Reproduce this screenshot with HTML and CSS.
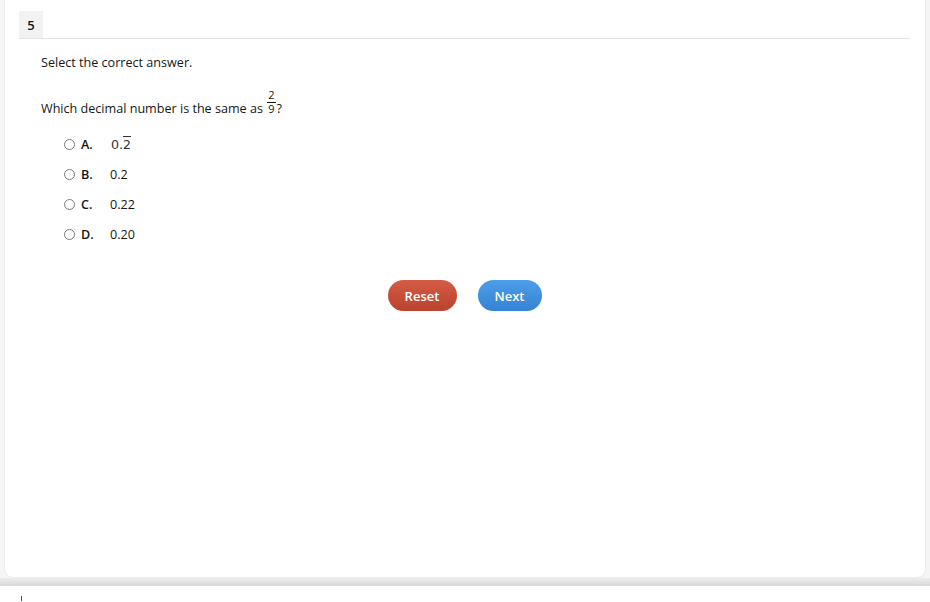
FILE: index.html
```html
<!DOCTYPE html>
<html lang="en">
<head>
  <meta charset="UTF-8">
  <title>Question 5</title>
  <link rel="stylesheet" href="styles.css">
</head>
<body>
  <div class="page">
    <div class="card">
      <div class="q-header">
        <span class="q-number">5</span>
      </div>

      <div class="q-body">
        <p class="prompt">Select the correct answer.</p>
        <p class="question">Which decimal number is the same as <span class="frac"><span class="num">2</span><span class="den">9</span></span>?</p>

        <ul class="options">
          <li class="option">
            <span class="radio"></span>
            <span class="letter">A.</span>
            <span class="value math">0.<span class="repeat">2</span></span>
          </li>
          <li class="option">
            <span class="radio"></span>
            <span class="letter">B.</span>
            <span class="value">0.2</span>
          </li>
          <li class="option">
            <span class="radio"></span>
            <span class="letter">C.</span>
            <span class="value">0.22</span>
          </li>
          <li class="option">
            <span class="radio"></span>
            <span class="letter">D.</span>
            <span class="value">0.20</span>
          </li>
        </ul>

        <div class="actions">
          <button class="btn btn-reset">Reset</button>
          <button class="btn btn-next">Next</button>
        </div>
      </div>
    </div>
  </div>
  <div class="band"></div>
  <div class="below"><span class="mark"></span></div>
</body>
</html>
```

FILE: styles.css
```css
:root {
  --text-color: #161616;
  --line-color: #e4e4e4;
  --reset-top: #d55b45;
  --reset-bottom: #b9432f;
  --next-top: #4d9de8;
  --next-bottom: #3583d3;
}

body {
  margin: 0;
  background-color: #ffffff;
  font-family: 'Open Sans', 'Liberation Sans', sans-serif;
  font-size: 12.6px;
  color: var(--text-color);
}

.page {
  background-color: #f5f5f5;
  padding: 0 5px;
  height: 578px;
}

.card {
  background-color: #ffffff;
  height: 577px;
  border-radius: 0 0 8px 8px;
  box-shadow: 0 0 2px rgba(0, 0, 0, 0.12);
  padding: 11px 15px 0 14px;
  box-sizing: border-box;
}

.q-header {
  display: flex;
  border-bottom: 1px solid var(--line-color);
}

.q-number {
  display: flex;
  align-items: center;
  justify-content: center;
  width: 24px;
  height: 27px;
  background-color: #f2f2f2;
  font-weight: 600;
  font-size: 13px;
}

.q-body {
  padding-left: 22px;
}

.prompt {
  margin: 15px 0 0;
  line-height: 18px;
}

.question {
  margin: 17px 0 0;
  line-height: 18px;
}

.frac {
  display: inline-block;
  text-align: center;
  font-size: 11px;
  line-height: 12px;
  margin: 0 1px;
}

.frac .num {
  display: block;
  border-bottom: 1px solid var(--text-color);
  padding: 0 1px 1px;
}

.frac .den {
  display: block;
}

.options {
  list-style: none;
  margin: 11px 0 0;
  padding: 0 0 0 23px;
}

.option {
  display: flex;
  align-items: center;
  height: 30px;
}

.radio {
  width: 9px;
  height: 9px;
  border: 1px solid #7a7a7a;
  border-radius: 50%;
  margin-right: 6px;
}

.letter {
  width: 28px;
  font-weight: 600;
}

.value {
  margin-left: 1px;
}

.math {
  font-family: 'DejaVu Sans', sans-serif;
  font-size: 12.6px;
  color: #333333;
  margin-left: 2px;
}

.repeat {
  text-decoration: overline;
}

.actions {
  display: flex;
  justify-content: center;
  gap: 21px;
  margin-top: 31px;
  margin-left: -22px;
}

.btn {
  border: none;
  height: 31px;
  border-radius: 16px;
  color: #ffffff;
  font-family: 'Open Sans', 'Liberation Sans', sans-serif;
  font-size: 13px;
  font-weight: 600;
  cursor: pointer;
}

.btn-reset {
  width: 69px;
  background: linear-gradient(var(--reset-top), var(--reset-bottom));
}

.btn-next {
  width: 64px;
  background: linear-gradient(var(--next-top), var(--next-bottom));
}

.band {
  height: 8px;
  background: linear-gradient(#ececec, #d9d9d9);
}

.below {
  height: 16px;
  padding-left: 21px;
}

.mark {
  display: inline-block;
  width: 1px;
  height: 5px;
  margin-top: 10px;
  background-color: #555555;
}
```
